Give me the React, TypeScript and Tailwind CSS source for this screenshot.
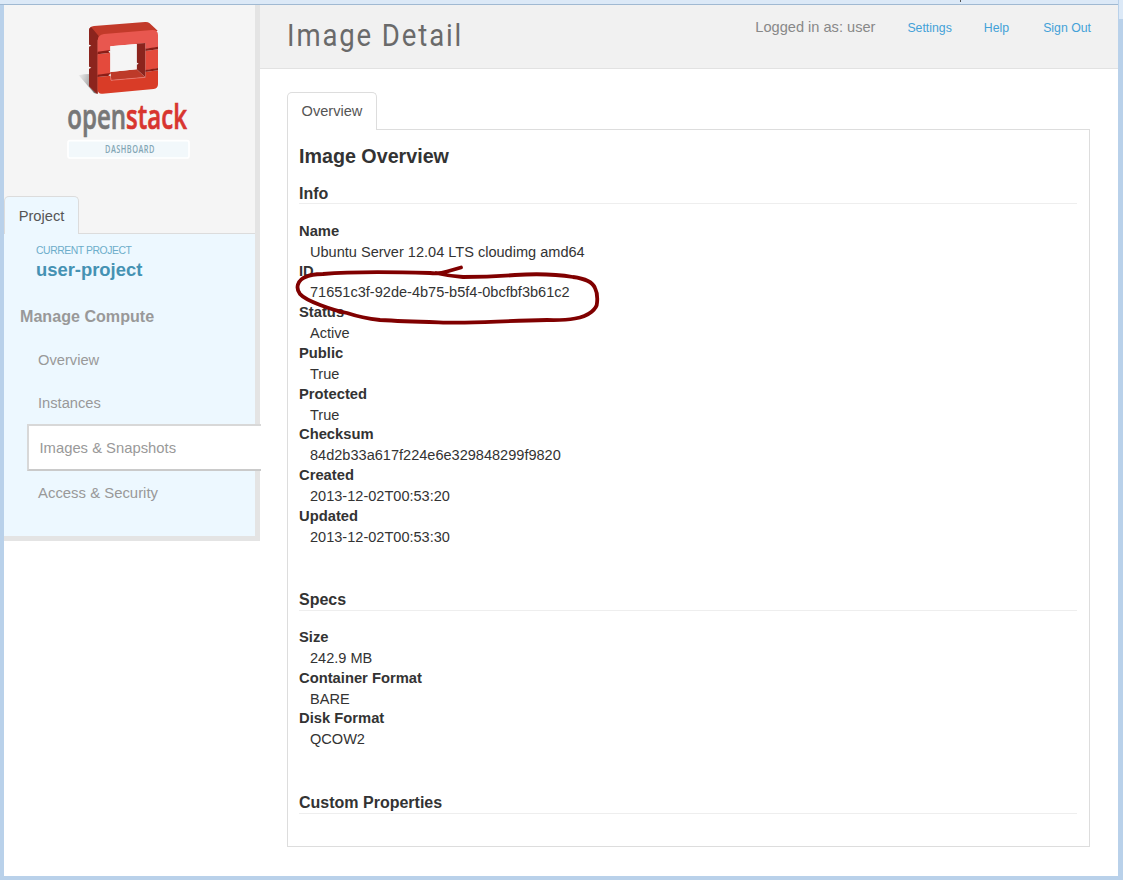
type Entry = { term: string; value: string };

const info: Entry[] = [
  { term: "Name", value: "Ubuntu Server 12.04 LTS cloudimg amd64" },
  { term: "ID", value: "71651c3f-92de-4b75-b5f4-0bcfbf3b61c2" },
  { term: "Status", value: "Active" },
  { term: "Public", value: "True" },
  { term: "Protected", value: "True" },
  { term: "Checksum", value: "84d2b33a617f224e6e329848299f9820" },
  { term: "Created", value: "2013-12-02T00:53:20" },
  { term: "Updated", value: "2013-12-02T00:53:30" },
];

const specs: Entry[] = [
  { term: "Size", value: "242.9 MB" },
  { term: "Container Format", value: "BARE" },
  { term: "Disk Format", value: "QCOW2" },
];

function Logo() {
  return (
    <svg viewBox="45 45 390 435" className="ml-[61px] mt-[10px] block h-[145px] w-[130px] shrink-0">
      <defs>
        <linearGradient id="shade" x1="0" x2="1" y1="0" y2="0.3">
          <stop offset="0" stopColor="#999" stopOpacity="0.1" />
          <stop offset="1" stopColor="#555" stopOpacity="0.8" />
        </linearGradient>
      </defs>
      <path d="M86 226 Q100 222 120 222 L120 258 L142 282 L132 279 Z" fill="url(#shade)" />
      <path d="M117 90 Q118 80 132 78 L285 66 Q293 65 299 70 L323 92 L300 100 L143 120 L143 282 L138 279 L119 259 Z" fill="#c23a2a" />
      <path d="M117 90 Q118 82 124 82 L146 108 L143 120 L143 281 L137 278 L117 259 Z" fill="#8b241d" />
      <path d="M143 122 Q144 104 162 102 L306 90 Q324 89 324 105 L324 142 L286 147 L286 130 L181 139 L181 153 L143 158 Z" fill="#e8574f" />
      <path d="M143 163 L181 158 L181 222 L143 226 Z" fill="#e44a3c" />
      <path d="M286 153 L324 148 L324 205 L286 211 Z" fill="#e44a3c" />
      <path d="M143 231 L181 227 L183 241 L286 232 L286 216 L324 211 L324 253 Q324 265 311 267 L158 281 Q143 283 143 268 Z" fill="#d93c27" />
      <path d="M143 155 L181 150 V158 L143 163Z M286 146 L324 140 V148 L286 153Z M143 224 L181 219 V227 L143 231Z M286 210 L324 204 V211 L286 216Z" fill="#8b1d16" />
      <path d="M260 131 L286 129 L286 232 L260 208 Z" fill="#8b241d" />
      <path d="M181 216 L260 208 L286 232 L183 241 Z" fill="#bd3a29" />
      <path d="M181 139 L260 132 V208 L181 216 Z" fill="#f5f5f5" />
      <path d="M183 235 V241 L286 232" fill="none" stroke="#ee8178" strokeWidth="2" />
      <path d="M115 133 L124 137 L116 140 Z M115 199 L124 203 L116 207 Z M175 155 L182 151 V160Z M259 187 L266 191 L259 195Z M175 226 L182 221 V229Z" fill="#f5f5f5" />
      <text transform="translate(52 388) scale(0.69 1)" textLength="520" lengthAdjust="spacingAndGlyphs" fill="#777" stroke="#777" strokeWidth="2" fontFamily="Open Sans, sans-serif" fontSize="105" fontWeight="600">
        open<tspan fill="#d8352f" stroke="#d8352f">stack</tspan>
      </text>
      <rect x="54" y="422" width="363" height="52" rx="6" fill="#f2f8fb" stroke="#fff" strokeWidth="5" />
      <text transform="translate(165 459) scale(0.69 1)" textLength="215" lengthAdjust="spacing" fill="#83a6b5" fontFamily="Open Sans, sans-serif" fontSize="32" fontWeight="600">
        DASHBOARD
      </text>
    </svg>
  );
}

function Sidebar() {
  return (
    <aside className="flex h-[536px] w-[256px] shrink-0 flex-col border-b-[5px] border-[#e4e4e4] bg-[#edf8ff]">
      <div className="flex h-[229px] w-full shrink-0 flex-col border-r-[5px] border-[#e4e4e4] bg-[#f5f5f5]">
        <Logo />
        <div className="mt-auto flex h-[38px] items-stretch">
          <div className="flex w-[75px] items-center justify-center rounded-t-[5px] border border-b-0 border-[#dcdcdc] bg-[#edf8ff] pt-0.5 text-[14.7px] text-[#555]">
            Project
          </div>
          <div className="grow border-b border-[#dcdcdc]" />
        </div>
      </div>
      <div className="flex grow flex-col">
        <div className="h-[190px] border-r-[5px] border-[#e4e4e4]">
          <div className="pl-8 pt-[10px]">
            <div className="text-[10.4px] leading-[13px] tracking-[-0.44px] text-[#6cadca]">CURRENT PROJECT</div>
            <div className="text-[18.4px] font-bold leading-[26px] text-[#4592b3]">user-project</div>
          </div>
          <h2 className="mt-[23px] pl-4 text-[16.1px] font-bold leading-5 text-[#999]">Manage Compute</h2>
          <div className="mt-6 pl-[34px] text-[14.7px] leading-5 text-[#999]">Overview</div>
          <div className="mt-[23px] pl-[34px] text-[14.7px] leading-5 text-[#999]">Instances</div>
        </div>
        <div className="ml-[23px] flex h-[47px] w-[234px] items-center border-y-2 border-l-2 border-[#d8d8d8] border-b-[#cacaca] bg-white pl-[10.5px] pt-0.5 text-[14.8px] text-[#999]">
          Images &amp; Snapshots
        </div>
        <div className="grow border-r-[5px] border-[#e4e4e4] pl-[34px] pt-3 text-[14.9px] leading-5 text-[#999]">
          Access &amp; Security
        </div>
      </div>
    </aside>
  );
}

function Header() {
  return (
    <header className="flex h-[64px] justify-between border-b border-[#e2e2e2] bg-[#f1f1f1] pl-[27px] pr-[27px]">
      <h1 className="origin-left scale-x-[0.86] whitespace-nowrap pt-[10px] font-[Roboto,sans-serif] text-[32px] font-normal leading-10 tracking-[2.2px] text-[#6a6a6a]">
        Image Detail
      </h1>
      <nav className="flex h-[46px] items-center text-[12.3px] text-[#43a1d8]">
        <span className="mr-8 text-[14.6px] text-[#888]">Logged in as: user</span>
        <a className="mr-8 pt-px">Settings</a>
        <a className="mr-[34px] pt-px">Help</a>
        <a className="pt-px">Sign Out</a>
      </nav>
    </header>
  );
}

function Entries({ entries }: { entries: Entry[] }) {
  return (
    <dl className="text-[14.55px]">
      {entries.map((e) => (
        <div key={e.term} className="h-[40.69px]">
          <dt className="h-[20.985px] text-[14.75px] font-bold leading-[20px]">{e.term}</dt>
          <dd className="pl-[11px] leading-[20px]">{e.value}</dd>
        </div>
      ))}
    </dl>
  );
}

export default function App() {
  return (
    <div className="relative flex h-[880px] w-[1123px] flex-col overflow-hidden bg-[#b9d1ea] font-['Liberation_Sans',Arial,sans-serif] text-[#333]">
      <div className="flex h-[5px] shrink-0 border-b border-[#a0b9d2] bg-[#dce9f7]">
        <div className="ml-[960px] h-[2px] w-px bg-[#555]" />
      </div>
      <div className="mb-1 ml-1 mr-[5px] flex grow items-start bg-white">
        <Sidebar />
        <div className="flex grow flex-col">
          <Header />
          <main className="pl-[27px] pr-7 pt-[23px]">
            <div className="flex h-[38px]">
              <div className="flex w-[90px] items-center justify-center rounded-t-[5px] border border-b-0 border-[#ddd] text-[14.6px] text-[#555]">
                Overview
              </div>
              <div className="grow border-b border-[#ddd]" />
            </div>
            <div className="h-[717px] border border-t-0 border-[#ddd] pl-[11px] pr-3 pt-[13px]">
              <h3 className="h-[40px] text-[19.7px] font-bold leading-[26px]">Image Overview</h3>
              <h4 className="mb-[16.78px] h-[21px] border-b border-[#eee] text-[16px] font-bold leading-[22px]">Info</h4>
              <Entries entries={info} />
              <h4 className="mb-[16.14px] mt-[43.72px] h-[21px] border-b border-[#eee] text-[16px] font-bold leading-5">Specs</h4>
              <Entries entries={specs} />
              <h4 className="mt-[43.8px] h-[21px] border-b border-[#eee] text-[16px] font-bold leading-5">Custom Properties</h4>
            </div>
          </main>
        </div>
      </div>
      <div className="absolute right-0 top-0 h-[19px] w-[5px] border-l border-[#b9d1ea] bg-[#dce9f7]" />
      <svg viewBox="290 260 315 70" className="absolute left-[290px] top-[260px] h-[70px] w-[315px]">
        <path
          d="M461 267.5 L447 271.5 Q440 274 430 273 C400 272 350 271.5 323 274 Q310 274.5 307 276.5 C296 280 296 289 300 294 C306 301 332 310 347 313 Q362 318 380 320 C405 321.5 430 322 453 322.7 C480 323 500 321 547 320 Q564 320.5 575 318.5 C590 316 597 308 597 303 Q598 294 595 288 C592 281 581 278 573 277 C555 274 530 274 515 275 Q490 277 463 277 Q449 276 436 273"
          fill="none"
          stroke="#800000"
          strokeWidth="3.8"
          strokeLinecap="round"
          strokeLinejoin="round"
        />
      </svg>
    </div>
  );
}
